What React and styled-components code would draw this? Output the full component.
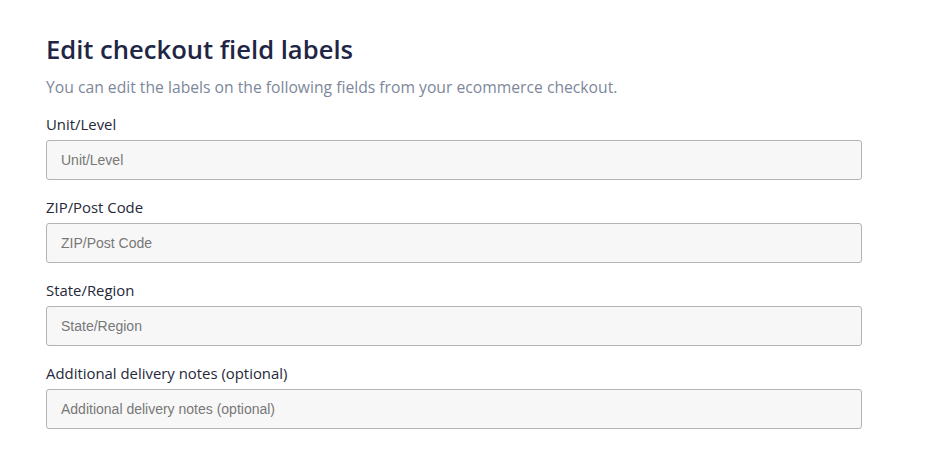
import React from 'react';
import styled, { createGlobalStyle } from 'styled-components';

const fields = [
    'Unit/Level',
    'ZIP/Post Code',
    'State/Region',
    'Additional delivery notes (optional)',
];

const App = () => {
    return (
        <>
            <GlobalStyle />
            <Container>
                <Title>Edit checkout field labels</Title>
                <Description>
                    You can edit the labels on the following fields from your ecommerce checkout.
                </Description>
                <Form>
                    { fields.map((name) => (
                        <Field key={ name }>
                            <Label>{ name }</Label>
                            <Input placeholder={ name } />
                        </Field>
                    )) }
                </Form>
            </Container>
        </>
    );
};

export default App;

const GlobalStyle = createGlobalStyle`
    body {
        margin: 0;
        background-color: #ffffff;
        font-family: "Open Sans", Lato, sans-serif;
    }
`;

const Container = styled.div`
    width: 816px;
    padding: 34px 46px 0;
    display: flex;
    flex-direction: column;
`;

const Title = styled.h1`
    margin: 0;
    font-size: 25.6px;
    font-weight: 600;
    line-height: 32px;
    color: #1f2544;
`;

const Description = styled.p`
    margin: 10px 0 0;
    font-size: 15.7px;
    line-height: 22px;
    color: #7d879b;
`;

const Form = styled.div`
    margin-top: 17px;
    display: flex;
    flex-direction: column;
    gap: 18px;
`;

const Field = styled.div`
    display: flex;
    flex-direction: column;
    gap: 6px;
`;

const Label = styled.label`
    font-size: 14.9px;
    line-height: 19px;
    color: #25293a;
`;

const Input = styled.input`
    box-sizing: border-box;
    width: 100%;
    height: 40px;
    padding: 0 14px;
    border: 1px solid #b3b3b3;
    border-radius: 3px;
    background-color: #f7f7f7;
    font-family: "Liberation Sans", Arial, sans-serif;
    font-size: 14px;
    color: #333;
    outline: none;

    &::placeholder {
        color: #777777;
    }
`;
